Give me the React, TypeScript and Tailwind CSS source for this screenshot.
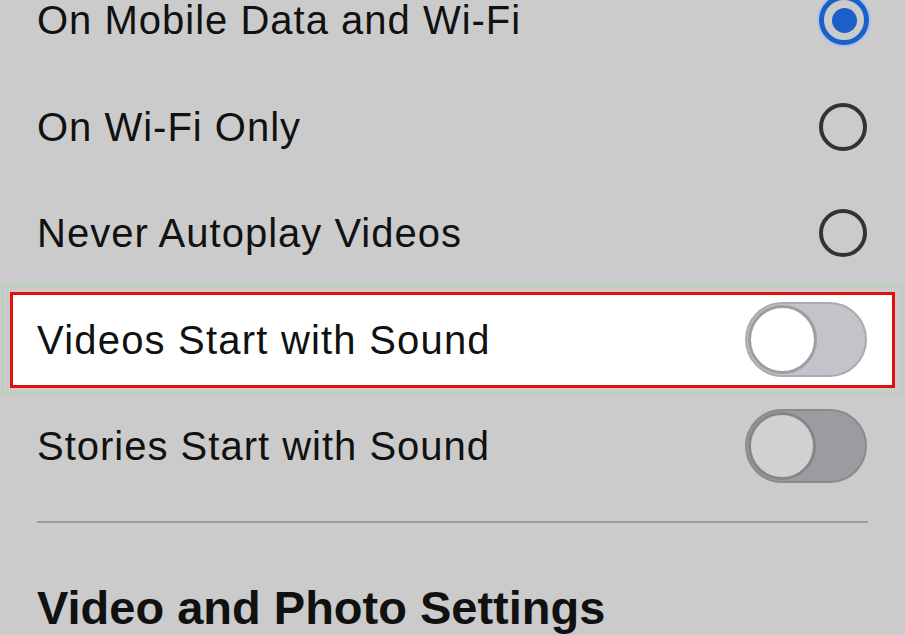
const font = { fontFamily: '"Liberation Sans", Arial, sans-serif' }

function Radio({ checked }: { checked?: boolean }) {
    if (checked) {
        return (
            <div className="w-[50px] h-[50px] rounded-full border-[5px] border-[#1c5fc9] shadow-[0_0_0_2px_#a9c3ea] flex items-center justify-center">
                <div className="w-[25px] h-[25px] rounded-full bg-[#1c5fc9]" />
            </div>
        )
    }
    return <div className="w-[48px] h-[48px] rounded-full border-[4px] border-[#333333]" />
}

function Toggle({ light }: { light?: boolean }) {
    return (
        <div
            className={
                light
                    ? "w-[122px] h-[75px] rounded-full bg-[#c2c4c9] border-[2px] border-[#a9abb0] flex items-center pl-[1px]"
                    : "w-[122px] h-[74px] rounded-full bg-[#9a9ca1] border-[2px] border-[#8a8b8e] flex items-center pl-[1px]"
            }
        >
            <div
                className={
                    light
                        ? "w-[69px] h-[69px] rounded-full bg-white border-[3px] border-[#9c9ea2]"
                        : "w-[68px] h-[68px] rounded-full bg-[#d1d1d1] border-[3px] border-[#858688]"
                }
            />
        </div>
    )
}

function Row({ label, children }: { label: string; children: React.ReactNode }) {
    return (
        <div className="h-[106.5px] flex items-center justify-between pl-[37px] pr-[38px]">
            <span className="text-[40px] tracking-[1px] text-[#111111]">{label}</span>
            {children}
        </div>
    )
}

export default function App() {
    return (
        <div className="w-[905px] h-[635px] overflow-hidden bg-[#cbcbcb]" style={font}>
            <div className="flex flex-col -mt-[33px]">
                <Row label="On Mobile Data and Wi-Fi">
                    <div className="mr-[-2px]"><Radio checked /></div>
                </Row>
                <Row label="On Wi-Fi Only">
                    <Radio />
                </Row>
                <Row label="Never Autoplay Videos">
                    <Radio />
                </Row>

                {/* highlighted row */}
                <div className="h-[106.5px] flex items-center px-[10px] relative">
                    <div className="absolute left-[2px] right-[2px] top-[-1px] bottom-[-1px] border border-[#a6d9a6]" />
                    <div className="relative h-[96px] w-full bg-white border-[3px] border-[#e01010] flex items-center justify-between pl-[24px] pr-[25px]">
                        <span className="text-[40px] tracking-[1.2px] text-[#111111]">Videos Start with Sound</span>
                        <Toggle light />
                    </div>
                </div>

                <Row label="Stories Start with Sound">
                    <Toggle />
                </Row>

                <div className="mx-[37px] mt-[21px] h-[2px] bg-[#9c9c9c]" />

                <h2 className="mt-[61px] pl-[37px] text-[47px] leading-[48px] font-bold text-[#111111]">
                    Video and Photo Settings
                </h2>
            </div>
        </div>
    )
}
